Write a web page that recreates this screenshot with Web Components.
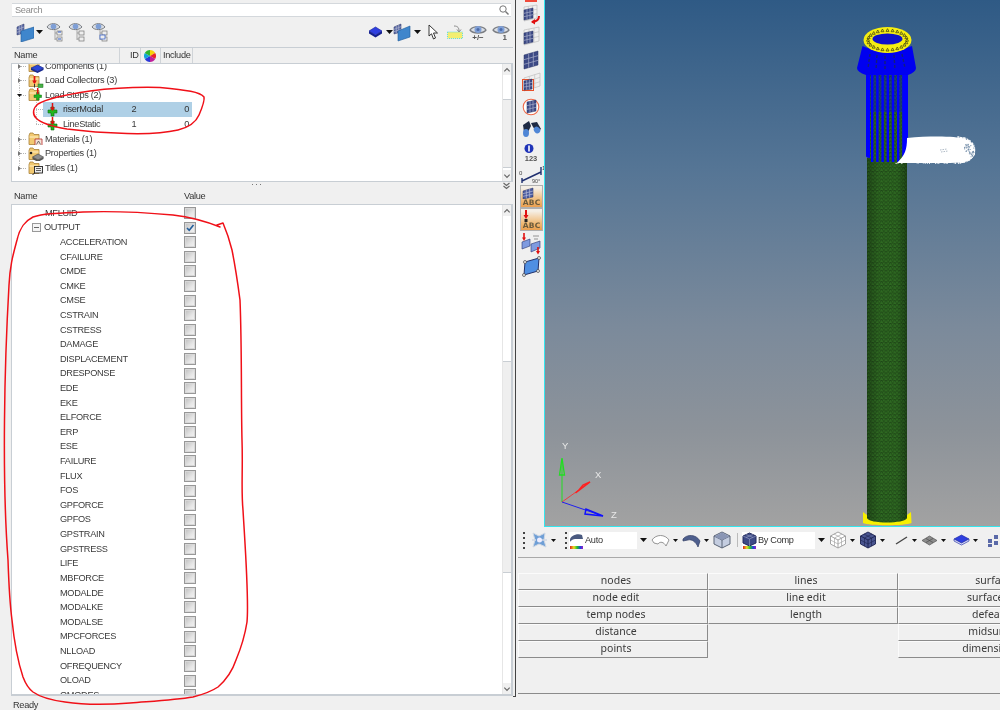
<!DOCTYPE html>
<html>
<head>
<meta charset="utf-8">
<title>HyperMesh</title>
<style>
  html, body { margin: 0; height: 100%; background: #f0f0f0; overflow: hidden; }
</style>
</head>
<body>
<hm-app></hm-app>

<script>
// shared svg bits, shadow roots can't <use> across each other so these are just strings
const svg = (w, h, body) => `<svg xmlns="http://www.w3.org/2000/svg" width="${w}" height="${h}" viewBox="0 0 ${w} ${h}" style="display:block">${body}</svg>`;

const UI_FONT = `"Liberation Sans", sans-serif`;
const UI_TRACK = "-.3px";

const meshLines = (pts, n, color) => {
  const [a, b, c, d] = pts;
  let out = "";
  for (let i = 1; i < n; i++) {
    const t = i / n;
    const l = (p, q) => [p[0] + (q[0] - p[0]) * t, p[1] + (q[1] - p[1]) * t];
    const [x1, y1] = l(a, b), [x2, y2] = l(d, c), [x3, y3] = l(a, d), [x4, y4] = l(b, c);
    out += `<path d="M${x1} ${y1}L${x2} ${y2}M${x3} ${y3}L${x4} ${y4}" stroke="${color}" stroke-width=".7"/>`;
  }
  return out;
};
const meshQuad = (pts, fill = "#3d4a86", line = "#aab0cc", n = 3) =>
  `<path d="M${pts.map(p => p.join(" ")).join("L")}Z" fill="${fill}" stroke="#2b3566" stroke-width=".5"/>` + meshLines(pts, n, line);

const wire = (pts, n = 3) =>
  `<path d="M${pts.map(p => p.join(" ")).join("L")}Z" fill="none" stroke="#b5b5b5" stroke-width=".6"/>` + meshLines(pts, n, "#c4c4c4");

const tinyArrow = `<svg width="7" height="4" viewBox="0 0 7 4" style="display:block"><path d="M0 0H7L3.5 4Z" fill="#111"/></svg>`;

const eye = (w = 18) => svg(w, 11, `
  <path d="M1 6C4 1.500 14 1.500 17 6C14 10 4 10 1 6Z" fill="#d9dde3" stroke="#7a7d82" stroke-width="1.300"/>
  <circle cx="9" cy="5.600" r="3.500" fill="#7f9fd6"/><circle cx="9" cy="5.600" r="1.500" fill="#4d6ba8"/>`);

const folder = (extra = "") => svg(16, 14, `
  <path d="M1 3.500V12.500H11V2.500H6L5 1H2Z" fill="#f2c971" stroke="#a8823a" stroke-width=".8"/>
  <path d="M1.500 5H10.500" stroke="#fff1c9" stroke-width="1"/>${extra}`);

const plusGreen = `<path d="M4 7H7V4H10V7H13V10H10V13H7V10H4Z" fill="#22b51f" stroke="#0e6d10" stroke-width=".6"/>`;
const redPin = `<path d="M8.500 0V6" stroke="#e01010" stroke-width="1.500"/><path d="M6 4.500H11L8.500 8Z" fill="#e01010"/>`;

const TREE_ICONS = {
  components: folder(`<path d="M3 9L9.500 6L15.500 9L9.500 12.500Z" fill="#2b49d8" stroke="#101f80" stroke-width=".6"/><path d="M3 9V11L9.500 14L15.500 11V9L9.500 12.500Z" fill="#16288f"/>`),
  collectors: folder(`<path d="M6.500 2V9" stroke="#e01010" stroke-width="1.700"/><path d="M4.200 6.500H8.800L6.500 10Z" fill="#e01010"/><rect x="10" y="10" width="5" height="3.500" fill="#46b246" stroke="#1f6d1f" stroke-width=".5"/><path d="M6.500 10V13.500" stroke="#333"/>`),
  steps: folder(`<path d="M6 7H8.500V4.500H11V7H13.500V9.500H11V12H8.500V9.500H6Z" fill="#22b51f" stroke="#0e6d10" stroke-width=".5"/><path d="M9.700 0V6" stroke="#e01010" stroke-width="1.500"/>`),
  step: svg(16, 14, plusGreen + redPin),
  materials: folder(`<path d="M7 13V7H14V13" fill="#f6e3d8" stroke="#b52a2a" stroke-width=".8"/><path d="M8.500 12.500L10.500 9L12.500 12.500" fill="none" stroke="#555" stroke-width=".8"/>`),
  properties: folder(`<path d="M4.500 10L10 7L15.500 10L10 13Z" fill="#8e8e8e" stroke="#444" stroke-width=".6"/><path d="M4.500 10V12L10 15L15.500 12V10L10 13Z" fill="#555"/><circle cx="3" cy="6" r="1.300" fill="#222"/>`),
  titles: folder(`<rect x="6.500" y="5.500" width="8" height="6.500" fill="#eee" stroke="#222" stroke-width=".9"/><path d="M8 7.500H13M8 9.500H13" stroke="#222" stroke-width=".7"/><path d="M6.500 12L4.500 14" stroke="#222"/>`)
};

const wheel = svg(12, 12, `
  <path d="M6 6L6 0A6 6 0 0 1 11.200 3Z" fill="#f6d30a"/>
  <path d="M6 6L11.200 3A6 6 0 0 1 11.200 9Z" fill="#e8242a"/>
  <path d="M6 6L11.200 9A6 6 0 0 1 6 12Z" fill="#c01f9c"/>
  <path d="M6 6L6 12A6 6 0 0 1 .8 9Z" fill="#2b36d8"/>
  <path d="M6 6L.8 9A6 6 0 0 1 .8 3Z" fill="#13a6d8"/>
  <path d="M6 6L.8 3A6 6 0 0 1 6 0Z" fill="#2eb52e"/>`);

/* ---------- search-box ---------- */
class SearchBox extends HTMLElement {
  constructor() {
    super();
    this.attachShadow({ mode: "open" }).innerHTML = `
      <style>
        :host { display: flex; align-items: center; height: 12px; margin: 3px 2px 0 12px; background: #fff;
                border: 1px solid #d4d8dc; border-width: 1px 0; font: 9.200px ${UI_FONT}; letter-spacing: ${UI_TRACK}; color: #8a8a8a; padding: 0 2px 0 3px; }
        span { flex: 1; }
      </style>
      <span>Search</span>
      ${svg(10, 10, `<circle cx="4" cy="4" r="3.200" fill="none" stroke="#777" stroke-width="1"/><path d="M6.500 6.500L9.500 9.500" stroke="#777" stroke-width="1.400"/>`)}`;
  }
}
customElements.define("search-box", SearchBox);

/* ---------- browser-toolbar ---------- */
class BrowserToolbar extends HTMLElement {
  constructor() {
    super();
    const miniTree = (accent) => svg(18, 20, `
      <g transform="translate(0,-1)">
      <path d="M1 6C3.500 1.500 11 1.500 14 6C11 9.500 3.500 9.500 1 6Z" fill="#d9dde3" stroke="#7a7d82"/>
      <circle cx="7.500" cy="5.500" r="2.800" fill="#7f9fd6"/></g>
      <path d="M9 8V18M9 11H12M9 17H12" stroke="#888" fill="none" stroke-width=".7"/>
      <rect x="11" y="9" width="5" height="4" fill="#eee" stroke="#777" stroke-width=".7"/>
      <rect x="11" y="15" width="5" height="4" fill="#eee" stroke="#777" stroke-width=".7"/>${accent}`);
    this.attachShadow({ mode: "open" }).innerHTML = `
      <style>
        :host { display: flex; align-items: center; height: 30px; margin-left: 12px; padding: 0 3px 0 3px;
                border-bottom: 1px solid #c8ced4; box-sizing: content-box; }
        .group { display: flex; align-items: center; }
        .right { margin-left: auto; }
        .num { font: bold 7px ${UI_FONT}; color: #555; text-align: center; line-height: 6px; }
      </style>
      <div class="group">
        ${svg(19, 19, meshQuad([[2,4],[9,1],[9,10],[2,12]], "#5b6aa6") + `<path d="M6 8L19 4V15L6 19Z" fill="#3f86cc" stroke="#1f5a9a" stroke-width=".6"/>`)}
        <span style="margin:0 3px 0 2px">${tinyArrow}</span>
        <span style="margin-right:4px">${miniTree(`<path d="M12 10h3M12 17h3" stroke="#2a58c8"/>`)}</span>
        <span style="margin-right:5px">${miniTree("")}</span>
        ${miniTree(`<rect x="9" y="13" width="5" height="4" fill="#eee" stroke="#2a58c8" stroke-width=".7"/>`)}
      </div>
      <div class="group right">
        ${svg(15, 12, `<path d="M1 5L7.500 1L14 5L7.500 9Z" fill="#2f3fe0" stroke="#111f9a" stroke-width=".6"/><path d="M1 5V7.500L7.500 11.500L14 7.500V5L7.500 9Z" fill="#14208f"/>`)}
        <span style="margin-left:3px">${tinyArrow}</span>
        ${svg(18, 19, meshQuad([[1,4],[8,1],[8,9],[1,11]], "#5b6aa6") + `<path d="M5 8L17 3V14L5 18Z" fill="#3f86cc" stroke="#1f5a9a" stroke-width=".6"/>`)}
        <span style="margin:0 7px 0 3px">${tinyArrow}</span>
        <span style="margin-right:9px">${svg(10, 16, `<path d="M1 1V12L3.500 9.800L5.500 15L7.500 14L5.500 9H9.500Z" fill="#fff" stroke="#222" stroke-width=".9"/>`)}</span>
        <span style="margin-right:6px">${svg(16, 14, `<rect x=".5" y="7" width="15" height="6.500" fill="#f3ee70" stroke="#63dce0" stroke-dasharray="1 1"/><path d="M7 1C11 1 12 3 12 6M10 4.500L12 7L14 4.500" fill="none" stroke="#8a8a8a" stroke-width="1"/>`)}</span>
        <div style="margin-right:5px">${eye()}<div class="num" style="font-size:8px">+/−</div></div>
        <div>${eye()}<div class="num" style="font-size:8px;text-align:right;padding-right:3px">1</div></div>
      </div>`;
  }
}
customElements.define("browser-toolbar", BrowserToolbar);

/* ---------- column-header ---------- */
class ColumnHeader extends HTMLElement {
  constructor() {
    super();
    this.attachShadow({ mode: "open" }).innerHTML = `
      <style>
        :host { display: flex; height: 15px; font: 9.200px/15px ${UI_FONT}; letter-spacing: ${UI_TRACK}; color: #333; flex: none; padding-left: 2px; }
      </style>
      <slot></slot>`;
  }
}
customElements.define("column-header", ColumnHeader);

class HeaderCell extends HTMLElement {
  constructor() {
    super();
    this.attachShadow({ mode: "open" }).innerHTML = `
      <style>
        :host { display: flex; align-items: center; box-sizing: border-box; width: var(--w); padding-left: var(--p, 0);
                height: 100%; border-right: var(--sep, 1px solid #d0d4d8); }
      </style>
      <slot></slot>`;
  }
}
customElements.define("header-cell", HeaderCell);

/* ---------- scroll-bar ---------- */
class ScrollBar extends HTMLElement {
  static get observedAttributes() { return ["top", "size"]; }
  constructor() {
    super();
    const chev = (up) => svg(9, 8, `<path d="${up ? "M1.500 5.500L4.500 2.500L7.500 5.500" : "M1.500 2.500L4.500 5.500L7.500 2.500"}" fill="none" stroke="#666" stroke-width="1.300"/>`);
    this.attachShadow({ mode: "open" }).innerHTML = `
      <style>
        :host { display: flex; flex-direction: column; justify-content: space-between; width: 9px; flex: none; background: #fff;
                border-left: 1px solid #e6e6e6; position: relative; box-sizing: border-box; }
        .end { background: #f0f0f0; height: 11px; display: flex; align-items: center; z-index: 1; }
        .thumb { position: absolute; left: 0; right: 0; background: #efefef; border-top: 1px solid #c9ced3; border-bottom: 1px solid #c9ced3; box-sizing: border-box; }
      </style>
      <div class="end">${chev(true)}</div>
      <div class="thumb"></div>
      <div class="end">${chev(false)}</div>`;
  }
  attributeChangedCallback() {
    const t = this.shadowRoot.querySelector(".thumb");
    t.style.top = this.getAttribute("top") + "px";
    t.style.height = this.getAttribute("size") + "px";
  }
}
customElements.define("scroll-bar", ScrollBar);

/* ---------- tree-row ---------- */
class TreeRow extends HTMLElement {
  constructor() {
    super();
    this.attachShadow({ mode: "open" });
  }
  connectedCallback() {
    const kid = this.hasAttribute("child");
    const open = this.hasAttribute("open");
    const twist = open
      ? `<path d="M0 1H5L2.500 4Z" fill="#111"/>`
      : `<path d="M1 0L4 2.500L1 5Z" fill="#777"/>`;
    this.shadowRoot.innerHTML = `
      <style>
        :host { display: grid; grid-template-columns: 107px 21px 52px; width: 180px; height: 14.600px; align-items: center; position: relative;
                font: 9.200px/14.600px ${UI_FONT}; letter-spacing: ${UI_TRACK}; color: #3a3a3a; }
        :host([selected]) { background: linear-gradient(to right, transparent 31px, #afd0e6 31px); color: #333; }
        .name { display: flex; align-items: center; white-space: nowrap; padding-left: ${kid ? 32 : 16}px; height: 100%; }
        .ic { width: 16px; flex: none; margin-right: ${kid ? 3 : 1}px; }
        .guide { position: absolute; left: 7px; top: 0; bottom: 0; width: 1px;
                 background: repeating-linear-gradient(#c4c4c4 0 1px, transparent 1px 2px); }
        :host([end]) .guide { bottom: 7px; }
        .h { position: absolute; left: ${kid ? 24 : 7}px; top: 7px; width: 8px; height: 1px;
             background: repeating-linear-gradient(to right, #b4b4b4 0 1px, transparent 1px 2px); }
        .v2 { position: absolute; left: 24px; top: 0; bottom: 0; width: 1px;
              background: repeating-linear-gradient(#c4c4c4 0 1px, transparent 1px 2px); }
        .tw { position: absolute; left: 5px; top: 5px; }
        .id { padding-left: 9px; text-align: center; }
        .inc { text-align: right; padding-right: 3px; }
      </style>
      <i class="guide"></i><i class="h"></i>
      ${kid ? `<i class="v2" style="${this.hasAttribute("last") ? "bottom:7px" : ""}"></i>` : `<span class="tw">${svg(5, 5, twist)}</span>`}
      <div class="name"><span class="ic">${TREE_ICONS[this.getAttribute("icon")]}</span><slot></slot></div>
      <div class="id">${this.getAttribute("rid") || ""}</div>
      <div class="inc">${this.getAttribute("inc") || ""}</div>`;
  }
}
customElements.define("tree-row", TreeRow);

/* ---------- value-row ---------- */
class ValueRow extends HTMLElement {
  constructor() {
    super();
    this.attachShadow({ mode: "open" });
  }
  connectedCallback() {
    const checked = this.hasAttribute("checked");
    const pad = this.getAttribute("pad") || 48;
    this.shadowRoot.innerHTML = `
      <style>
        :host { display: grid; grid-template-columns: 172px 13px; height: 14.620px; align-items: center; flex: none;
                font: 9.200px/14.620px ${UI_FONT}; letter-spacing: ${UI_TRACK}; color: #3a3a3a; position: relative; }
        .name { padding-left: ${pad}px; white-space: nowrap; display: flex; align-items: center; height: 100%; }
        .box { position: absolute; left: 20px; top: 3px; width: 7px; height: 7px; border: 1px solid #999; background: #f4f4f4; }
        .box::after { content: ""; position: absolute; left: 1px; right: 1px; top: 3px; height: 1px; background: #666; }
        .chk { width: 12px; height: 12px; box-sizing: border-box; border: 1px solid #979797;
               background: linear-gradient(135deg, #bdbdbd, #e6e6e6 60%, #f4f4f4); box-shadow: inset 0 0 0 1px #d8d8d8; }
      </style>
      ${this.hasAttribute("group") ? `<i class="box"></i>` : ""}
      <div class="name"><slot></slot></div>
      <div class="chk">${checked ? svg(10, 10, `<path d="M2 5L4.200 7.300L8.500 2" fill="none" stroke="#245e9a" stroke-width="1.600"/>`) : ""}</div>`;
  }
}
customElements.define("value-row", ValueRow);

/* ---------- browser-panel: left side ---------- */
class BrowserPanel extends HTMLElement {
  constructor() {
    super();
    const names = ["ACCELERATION","CFAILURE","CMDE","CMKE","CMSE","CSTRAIN","CSTRESS","DAMAGE","DISPLACEMENT","DRESPONSE","EDE","EKE","ELFORCE","ERP","ESE","FAILURE","FLUX","FOS","GPFORCE","GPFOS","GPSTRAIN","GPSTRESS","LIFE","MBFORCE","MODALDE","MODALKE","MODALSE","MPCFORCES","NLLOAD","OFREQUENCY","OLOAD","OMODES"];
    this.attachShadow({ mode: "open" }).innerHTML = `
      <style>
        :host { display: flex; flex-direction: column; height: 710px; width: 516px; flex: none; position: relative; }
        .main { width: 516px; height: 697px; display: flex; flex-direction: column; box-sizing: border-box; padding-right: 2px; border-right: 1px solid #444; }
        .frame { display: flex; border: 1px solid #c8ced4; border-right-width: 2px; margin-left: 11px; box-sizing: border-box; }
        .tree { height: 119px; }
        .tree .body, .list .body { flex: 1; background: #fff; overflow: hidden; }
        .tree .inner { margin-top: -5.300px; }
        .list { height: 492px; border-bottom-width: 2px; }
        .list .inner { margin-top: .7px; }
        .split { height: 7px; flex: none; display: flex; justify-content: center; align-items: center; position: relative; }
        .dots { width: 9px; height: 1px; position: relative; top: -1px; background: repeating-linear-gradient(to right, #777 0 1px, transparent 1px 4px); }
        .dbl { position: absolute; right: 2px; top: 0; }
        .status { height: 13px; font: 9.200px/16px ${UI_FONT}; letter-spacing: ${UI_TRACK}; color: #333; padding-left: 13px; overflow: hidden; }
        .hd { margin-left: 12px; }
        .lower { line-height: 17px; }
        .foot { position: absolute; left: 513px; top: 696px; width: 3px; height: 1px; background: #444; }
      </style>
      <div class="main">
        <search-box></search-box>
        <browser-toolbar></browser-toolbar>
        <column-header class="hd">
          <header-cell style="--w:106px">Name</header-cell>
          <header-cell style="--w:21px;--p:10px">ID</header-cell>
          <header-cell style="--w:20px;--p:3px">${wheel}</header-cell>
          <header-cell style="--w:32px;--p:2px">Include</header-cell>
        </column-header>
        <div class="frame tree">
          <div class="body"><div class="inner">
            <tree-row icon="components">Components (1)</tree-row>
            <tree-row icon="collectors">Load Collectors (3)</tree-row>
            <tree-row icon="steps" open>Load Steps (2)</tree-row>
            <tree-row icon="step" child selected rid="2" inc="0">riserModal</tree-row>
            <tree-row icon="step" child last rid="1" inc="0">LineStatic</tree-row>
            <tree-row icon="materials">Materials (1)</tree-row>
            <tree-row icon="properties">Properties (1)</tree-row>
            <tree-row icon="titles" end>Titles (1)</tree-row>
          </div></div>
          <scroll-bar top="35" size="69"></scroll-bar>
        </div>
        <div class="split"><i class="dots"></i>
          <span class="dbl">${svg(9, 8, `<path d="M1.500 1L4.500 3.500L7.500 1M1.500 4L4.500 6.500L7.500 4" fill="none" stroke="#666" stroke-width="1.100"/>`)}</span>
        </div>
        <column-header class="hd lower">
          <header-cell style="--w:170px;--sep:0">Name</header-cell>
          <header-cell style="--w:60px;--sep:0">Value</header-cell>
        </column-header>
        <div class="frame list">
          <div class="body"><div class="inner">
            <value-row pad="33">MFLUID</value-row>
            <value-row pad="32" group checked>OUTPUT</value-row>
            ${names.map(n => `<value-row>${n}</value-row>`).join("")}
          </div></div>
          <scroll-bar top="156" size="212"></scroll-bar>
        </div>
      </div>
      <div class="status">Ready</div>
      <i class="foot"></i>`;
  }
}
customElements.define("browser-panel", BrowserPanel);

/* ---------- side-toolbar: vertical icons ---------- */
class SideToolbar extends HTMLElement {
  constructor() {
    super();
    const abc = (top) => `<div class="abc">${top}<span class="lbl">ABC</span></div>`;
    const cells = [
      [4, `<span class="redbar"></span>`],
      [22, svg(24, 22, wire([[5,3],[18,1],[18,14],[5,17]]) + meshQuad([[5,6],[14,4],[14,14],[5,16]]) + `<path d="M20 12C20 16 18 17 13 18" fill="none" stroke="#e01010" stroke-width="2"/><path d="M16 15L12 18L16 20.500Z" fill="#e01010"/>`)],
      [22, svg(24, 22, wire([[5,4],[20,1],[20,15],[5,19]]) + meshQuad([[5,7],[14,5],[14,16],[5,18]]))],
      [24, svg(24, 24, meshQuad([[5,7],[19,3],[19,17],[5,21]]))],
      [24, svg(24, 24, wire([[5,6],[21,1],[21,14],[5,19]]) + `<rect x="3.500" y="7.500" width="11" height="11" fill="none" stroke="#e8502a"/>` + meshQuad([[5,9],[13,7],[13,17],[5,18]]))],
      [22, svg(24, 22, `<circle cx="12" cy="11" r="7.800" fill="#fff" stroke="#ef6a4a" stroke-width="1.100"/>` + meshQuad([[8,6],[17,4],[17,15],[8,17]]))],
      [22, svg(24, 22, `<path d="M4 7L10 3L12 8L9 14L5 14Z" fill="#1e2a44"/><path d="M12 5L18 4L22 11L18 14L14 9Z" fill="#1e2a44"/><ellipse cx="7" cy="15" rx="3" ry="4" fill="#4f86d6"/><ellipse cx="18" cy="12" rx="3" ry="3.500" fill="#4f86d6" transform="rotate(-40 18 12)"/>`)],
      [24, `<div class="info">${svg(24, 12, `<circle cx="10" cy="6.500" r="4.500" fill="#1f33b8"/><rect x="9.200" y="3.500" width="1.600" height="6" fill="#fff"/>`)}<span class="n">123</span></div>`],
      [21, svg(26, 21, `<path d="M4 17L23 8M23 3V11M4 14V19" stroke="#1f2f6f" stroke-width="1.400" fill="none"/><text x="1" y="11" font-size="6" font-family="Liberation Sans" fill="#444">0</text><text x="24" y="6" font-size="6" font-family="Liberation Sans" fill="#444">1</text><text x="14" y="19" font-size="5.500" font-family="Liberation Sans" fill="#444">90°</text>`)],
      [23, abc(svg(20, 12, meshQuad([[2,4],[12,1],[12,10],[2,12]], "#4a5aa0", "#b9bed8")))],
      [23, abc(svg(20, 12, `<path d="M5 0V7" stroke="#e01010" stroke-width="2"/><path d="M2.500 5H7.500L5 9Z" fill="#e01010"/><rect x="3.500" y="9" width="3" height="3" fill="#222"/>`))],
      [24, svg(24, 24, `<path d="M3 11L11 8V15L3 18Z" fill="#7f9be0" stroke="#28356e" stroke-width=".6"/><path d="M12 13L21 10V17L12 21Z" fill="#7f9be0" stroke="#28356e" stroke-width=".6"/><path d="M5 2V8" stroke="#e01010" stroke-width="1.600"/><path d="M3 6.500H7L5 10Z" fill="#e01010"/><path d="M19 16V21" stroke="#e01010" stroke-width="1.600"/><path d="M17 20H21L19 23.500Z" fill="#e01010"/><path d="M14 5H20M15 8H19" stroke="#888" stroke-width=".9"/>`)],
      [22, svg(24, 22, `<path d="M6 7L20 3L19 16L5 20Z" fill="#4f8fe2" stroke="#22316a"/><g fill="#eee" stroke="#444" stroke-width=".7"><circle cx="6" cy="7" r="1.500"/><circle cx="20" cy="3" r="1.500"/><circle cx="19" cy="16" r="1.500"/><circle cx="5" cy="20" r="1.500"/></g>`)]
    ];
    this.attachShadow({ mode: "open" }).innerHTML = `
      <style>
        :host { display: flex; flex-direction: column; align-items: center; width: 28px; box-sizing: border-box; padding-left: 2px; flex: none; overflow: hidden; }
        .cell { display: flex; justify-content: center; align-items: center; flex: none; width: 100%; }
        .redbar { width: 12px; height: 2px; background: #f04a3a; align-self: flex-start; }
        .info { display: flex; flex-direction: column; align-items: center; font: bold 7.500px/9px ${UI_FONT}; color: #555; }
        .abc { width: 21px; height: 21px; border: 1px solid #b0b0b0; box-sizing: content-box; position: relative; overflow: hidden;
               background: linear-gradient(#f5efe6 10%, #f0b872 70%, #e99f50); }
        .abc svg { margin-top: 1px; }
        .lbl { position: absolute; right: 1px; bottom: 0; font: bold 7.500px/8px "DejaVu Sans", sans-serif; color: #6a5a3c; letter-spacing: .2px; }
      </style>
      ${cells.map(([h, c]) => `<div class="cell" style="height:${h}px">${c}</div>`).join("")}`;
  }
}
customElements.define("side-toolbar", SideToolbar);

/* ---------- model-view: the graphics area ---------- */
class ModelView extends HTMLElement {
  constructor() {
    super();
    // svg coords are page coords minus the left/top of this area (545, 0)
    const ox = 545;
    let stripes = "", ring = "", blob = "";
    for (let x = 871; x <= 903; x += 5.200) stripes += `<rect x="${x - ox}" y="74" width="2.400" height="88" fill="#0000ff"/>`;
    for (let i = 0; i < 24; i++) {
      const a = i / 24 * Math.PI * 2;
      const cx = 342.5 + 19.5 * Math.cos(a), cy = 40 + 9.8 * Math.sin(a);
      ring += `<path d="M${cx - 1.500} ${cy + 1.200}L${cx} ${cy - 1.500}L${cx + 1.500} ${cy + 1.200}Z" fill="none" stroke="#3a3a10" stroke-width=".7"/>`;
    }
    // speckle on the end of the white sheet
    let seed = 7;
    const rnd = () => (seed = (seed * 16807) % 2147483647) / 2147483647;
    for (let i = 0; i < 240; i++) {
      const a = rnd() * Math.PI - Math.PI / 2, r = .86 + rnd() * .16;
      const cx = 413 + 17 * r * Math.cos(a), cy = 150 + 13 * r * Math.sin(a);
      blob += `<circle cx="${cx}" cy="${cy}" r=".55" fill="#fff"/>`;
    }
    for (let i = 0; i < 40; i++) {
      blob += `<circle cx="${350 + rnd() * 70}" cy="${162 + rnd() * 1.500}" r=".6" fill="#fff"/>`;
      blob += `<circle cx="${419 + rnd() * 10}" cy="${144 + rnd() * 13}" r=".6" fill="#6f8aa6"/>`;
    }
    this.attachShadow({ mode: "open" }).innerHTML = `
      <style>
        :host { display: block; flex: 1; height: 527px; box-sizing: border-box; border-left: 1.500px solid #35e6ee; border-bottom: 1.500px solid #35e6ee;
                background: linear-gradient(#2f5a85 0, #557595 32%, #7b8a9b 62%, #8d939a 82%, #a2a2a2 100%); overflow: hidden; position: relative; }
        svg { position: absolute; left: -.5px; top: 0; }
        text { font: 9.500px ${UI_FONT}; fill: #e8e8e8; }
      </style>
      <svg width="455" height="527" viewBox="0 0 455 527" xmlns="http://www.w3.org/2000/svg">
        <defs>
          <pattern id="tri" width="4.400" height="3.800" patternUnits="userSpaceOnUse">
            <rect width="4.400" height="3.800" fill="#2f6a22"/>
            <path d="M0 3.800L2.200 0L4.400 3.800M0 0H4.400" fill="none" stroke="#173a12" stroke-width=".6"/>
          </pattern>
          <linearGradient id="shade" x1="0" x2="1">
            <stop offset="0" stop-color="#000" stop-opacity=".25"/><stop offset=".3" stop-color="#000" stop-opacity="0"/>
            <stop offset=".75" stop-color="#000" stop-opacity="0"/><stop offset="1" stop-color="#000" stop-opacity=".3"/>
          </linearGradient>
        </defs>
        <!-- base flange -->
        <path d="M318 512L322 515H362L366 512L366.500 523C360 526 324 526 318 523Z" fill="#f8f000"/>
        <!-- stem -->
        <path d="M322 158H362V518C360 524 324 524 322 518Z" fill="url(#tri)"/>
        <path d="M322 158H362V518C360 524 324 524 322 518Z" fill="url(#shade)"/>
        <!-- upper blue section -->
        <path d="M321 74H363V156C360 163 326 163 321 156Z" fill="url(#tri)"/>
        <path d="M321 74H325V158C323 158 321 157 321 156ZM359 74H363V156L359 160Z" fill="#0000ff"/>
        ${stripes}
        <path d="M321 74H363V112H321Z" fill="#0000ff" opacity=".35"/>
        <!-- flare -->
        <path d="M317.500 46C329 52 353 52 367 46L371 68Q371 72 363 75H321Q312 72 312 68Z" fill="#0000f0"/>
        <path d="M325 54L323 68M332 55L331 70M340 56V71M349 55L350 70M357 54L360 68" stroke="#141f78" stroke-width="1.400" stroke-dasharray="3 2"/>
        <!-- top ring -->
        <ellipse cx="342.500" cy="40" rx="24" ry="13" fill="#f6ee10"/>
        <ellipse cx="342.500" cy="39" rx="15" ry="5.500" fill="#1010c8"/>
        ${ring}
        <!-- white sheet sticking out of the riser -->
        <path d="M352 163C360 155 362 150 362 138C385 136 410 136 420 139C428 142 431 148 430 154C428 160 420 163 405 163Z" fill="#fff"/>
        ${blob}
        <path d="M395 150L402 149M396 152L403 151" stroke="#9aa8b8" stroke-width=".8" stroke-dasharray="1.500 1"/>
        <!-- triad -->
        <path d="M17 502V459" stroke="#22dd22" stroke-width="1"/>
        <path d="M17 458L19.500 475H14.500Z" fill="none" stroke="#22dd22" stroke-width="1.300"/>
        <path d="M17 502L45 482" stroke="#e84040" stroke-width="1"/>
        <path d="M45 482L30.500 493L34 490L38 485Z" fill="none" stroke="#ff2020" stroke-width="1.500"/>
        <path d="M17 502L58 516" stroke="#2020ee" stroke-width="1"/>
        <path d="M58 516L41 509L40 514Z" fill="none" stroke="#1010ff" stroke-width="1.500"/>
        <text x="17" y="449">Y</text>
        <text x="50" y="478">X</text>
        <text x="66" y="518">Z</text>
      </svg>`;
  }
}
customElements.define("model-view", ModelView);

/* ---------- tool-combo ---------- */
class ToolCombo extends HTMLElement {
  constructor() {
    super();
    this.attachShadow({ mode: "open" }).innerHTML = `
      <style>
        :host { display: flex; align-items: center; width: 80px; height: 17px; background: #fff; flex: none;
                font: 9.200px/17px ${UI_FONT}; letter-spacing: ${UI_TRACK}; color: #333; }
        .ic { width: 16px; flex: none; height: 17px; }
        .txt { flex: 1; white-space: nowrap; }
        .btn { width: 12px; height: 17px; background: #f0f0f0; display: flex; align-items: center; justify-content: center; }
      </style>
      <span class="ic"><slot name="icon"></slot></span>
      <span class="txt"><slot></slot></span>
      <span class="btn">${tinyArrow}</span>`;
  }
}
customElements.define("tool-combo", ToolCombo);

/* ---------- model-toolbar: horizontal strip under the view ---------- */
class ModelToolbar extends HTMLElement {
  constructor() {
    super();
    const rainbow = `<linearGradient id="rb"><stop offset="0" stop-color="#e02020"/><stop offset=".3" stop-color="#e8e020"/><stop offset=".55" stop-color="#20c030"/><stop offset=".8" stop-color="#2040e0"/><stop offset="1" stop-color="#a020c0"/></linearGradient><rect x="1" y="14" width="13" height="3" fill="url(#rb)"/>`;
    const dots = `<i class="grip"></i>`;
    const small = (mr = 4) => `<span class="arr" style="margin-right:${mr}px">${svg(5, 3, `<path d="M0 0H5L2.500 3Z" fill="#111"/>`)}</span>`;
    const cube = (fill, line) => svg(18, 18, `
      <path d="M9 1L16.500 5V13L9 17L1.500 13V5Z" fill="${fill}" stroke="${line}" stroke-width=".9"/>
      <path d="M1.500 5L9 9L16.500 5M9 9V17" fill="none" stroke="${line}" stroke-width=".9"/>
      <path d="M5 3L12.500 7V15M13 3L5.500 7V15M1.500 9L9 13L16.500 9" fill="none" stroke="${line}" stroke-width=".6"/>`);
    this.attachShadow({ mode: "open" }).innerHTML = `
      <style>
        :host { display: flex; align-items: center; height: 31px; box-sizing: border-box; flex: none; margin-left: 2px; padding: 0 0 4px 5px; overflow: hidden; border-bottom: 1px solid #a9a9a9; }
        .grip { width: 2px; height: 17px; flex: none; background: repeating-linear-gradient(#444 0 2px, transparent 2px 5px); }
        .arr { margin-left: 3px; flex: none; }
        svg { flex: none; }
        .div { width: 1px; height: 14px; background: #bbb; margin: 0 4px 0 0; flex: none; }
      </style>
      ${dots}
      <span style="margin-left:5px">${svg(18, 18, `<path d="M3 2L9 5L15 2L14 9L16 16L9 13L3 16L5 9Z" fill="#6f9fd6" stroke="#cfd8e4"/><circle cx="9.500" cy="9" r="2.500" fill="#eef"/><path d="M2 9H6M12 9H17" stroke="#cfd8e4" stroke-width="1.500"/>`)}</span>
      ${small(9)}
      ${dots}
      <tool-combo style="margin-left:2px">
        <span slot="icon">${svg(16, 18, `<path d="M1 8C1 4 8 1 13 3L14 7L6 7C3 7 1 10 1 10Z" fill="#4a5a80"/>` + rainbow)}</span>
        Auto
      </tool-combo>
      <span style="margin-left:2px">${svg(19, 15, `<path d="M1 7C5 1 14 1 18 7L15 13C13 9 9 8 7 11L3 10Z" fill="#fff" stroke="#8a8a8a" stroke-width=".9"/>`)}</span>
      ${small()}
      ${svg(19, 15, `<path d="M1 6C5 1 14 1 18 8L16 14C14 9 10 6 6 7L1 8Z" fill="#4e5f8e" stroke="#333f66" stroke-width=".7"/>`)}
      ${small()}
      <span style="margin-right:6px">${svg(18, 18, `<path d="M9 1L17 5V13L9 17L1 13V5Z" fill="#c4cde0" stroke="#5a6476"/><path d="M1 5L9 9L17 5M9 9V17" fill="none" stroke="#5a6476"/><path d="M1.500 5.500L9 1.500L16.500 5.500L9 9Z" fill="#8a96b5"/>`)}</span>
      <i class="div"></i>
      <tool-combo style="width:85px">
        <span slot="icon">${svg(16, 18, `<path d="M7.500 1L14 4V11L7.500 14L1 11V4Z" fill="#3d4a86" stroke="#232b5c"/><path d="M1 4L7.500 7L14 4M7.500 7V14M4 2.500L11 5.500M11 2.500L4 5.500" stroke="#9aa2c6" fill="none" stroke-width=".6"/>` + rainbow.replace(/rb/g, "rb2"))}</span>
        By Comp
      </tool-combo>
      <span style="margin-left:2px">${cube("#fff", "#9a9a9a")}</span>
      ${small()}
      ${cube("#4a5590", "#1c2350")}
      ${small(10)}
      ${svg(14, 10, `<path d="M1 9L12 2" stroke="#444" stroke-width="1.400"/>`)}
      ${small()}
      ${svg(17, 11, `<path d="M1 5.500L8.500 1L16 5.500L8.500 10Z" fill="#8c8c8c" stroke="#555" stroke-width=".7"/><path d="M5 3.500L12 7.500M12 3.500L5 7.500" stroke="#444" stroke-width=".6"/>`)}
      ${small(7)}
      ${svg(17, 12, `<path d="M1 5L8.500 1L16 5L8.500 9Z" fill="#2f3fe0" stroke="#111f9a" stroke-width=".6"/><path d="M1 5V7L8.500 11L16 7V5L8.500 9Z" fill="#d8daf8" stroke="#111f9a" stroke-width=".6"/>`)}
      ${small(9)}
      ${svg(14, 14, `<rect x="1" y="6" width="4" height="4" fill="#5a69a8"/><rect x="7" y="2" width="4" height="4" fill="#5a69a8"/><rect x="7" y="8" width="4" height="4" fill="#5a69a8"/><rect x="1" y="11" width="4" height="3" fill="#5a69a8"/>`)}`;
  }
}
customElements.define("model-toolbar", ModelToolbar);

/* ---------- panel-button / panel-grid ---------- */
class PanelButton extends HTMLElement {
  constructor() {
    super();
    this.attachShadow({ mode: "open" }).innerHTML = `
      <style>
        :host { display: block; box-sizing: border-box; height: 17.100px; text-align: center; padding-left: 6px;
                font: 10.500px/13px "Noto Sans", sans-serif; color: #3a3a3a; white-space: nowrap;
                border-top: 1px solid #fbfbfb; border-left: 1px solid #fbfbfb; border-right: 1.500px solid #8b8b8b; border-bottom: 1.500px solid #8b8b8b; }
      </style>
      <slot></slot>`;
  }
}
customElements.define("panel-button", PanelButton);

class PanelGrid extends HTMLElement {
  constructor() {
    super();
    this.attachShadow({ mode: "open" }).innerHTML = `
      <style>
        :host { display: grid; grid-template-columns: repeat(3, 190px); grid-auto-rows: 17.100px; padding: 15px 0 0 0; margin-left: 2px; width: 482px;
                height: 136px; box-sizing: border-box; border-bottom: 1.500px solid #8b8b8b; flex: none; }
      </style>
      <slot></slot>`;
  }
}
customElements.define("panel-grid", PanelGrid);

/* ---------- red-marks: hand drawn notes on the screenshot ---------- */
class RedMarks extends HTMLElement {
  constructor() {
    super();
    this.attachShadow({ mode: "open" }).innerHTML = `
      <style>
        :host { position: absolute; left: 0; top: 0; width: 1000px; height: 710px; pointer-events: none; }
        path { fill: none; stroke: #f01018; stroke-width: 1.500; stroke-linecap: round; stroke-linejoin: round; }
      </style>
      <svg width="1000" height="710" viewBox="0 0 1000 710" xmlns="http://www.w3.org/2000/svg">
        <path d="M204 97C200 92 187 90 160 87.500C140 87 113 88 90 91C70 94 46 99 38 104C33 108 32 114 36 118C42 124 55 127 67 129C90 132 110 133 127 133.500C145 134 165 133 178 130C190 127 196 122 199 115C202 108 205 101 204 97Z"/>
        <path d="M220 227C205 221 190 217 173 215C140 212 110 211 83 212C60 213 45 213 33 217C25 221 20 227 17 240C13 255 10 265 9 285C7 320 5 360 4.500 420C4 470 5 520 8 560C9 590 10 605 12 620C15 650 19 665 23 677C26 685 29 689 33 692C40 697 50 700 65 702C85 705 105 705 130 703C155 701 175 700 193 697C205 694 212 691 218 687C226 680 232 672 236 660C241 648 245 635 247 622C249 600 246 560 243 510C241 490 243 470 242 440C241 400 242 350 240 300C238 285 235 265 232 250C229 238 226 230 223 223L217 225"/>
      </svg>`;
  }
}
customElements.define("red-marks", RedMarks);

/* ---------- hm-app ---------- */
class HmApp extends HTMLElement {
  constructor() {
    super();
    this.attachShadow({ mode: "open" }).innerHTML = `
      <style>
        :host { display: flex; width: 1000px; height: 710px; position: relative; overflow: hidden; background: #f0f0f0; filter: blur(.35px); }
        .right { width: 484px; display: flex; flex-direction: column; overflow: hidden; }
        .top { display: flex; height: 527px; flex: none; }
      </style>
      <browser-panel></browser-panel>
      <div class="right">
        <div class="top">
          <side-toolbar></side-toolbar>
          <model-view></model-view>
        </div>
        <model-toolbar></model-toolbar>
        <panel-grid>
          <panel-button>nodes</panel-button><panel-button>lines</panel-button><panel-button>surfaces</panel-button>
          <panel-button>node edit</panel-button><panel-button>line edit</panel-button><panel-button>surface edit</panel-button>
          <panel-button>temp nodes</panel-button><panel-button>length</panel-button><panel-button>defeature</panel-button>
          <panel-button>distance</panel-button><span></span><panel-button>midsurface</panel-button>
          <panel-button>points</panel-button><span></span><panel-button>dimensioning</panel-button>
        </panel-grid>
      </div>
      <red-marks></red-marks>`;
  }
}
customElements.define("hm-app", HmApp);
</script>
</body>
</html>
